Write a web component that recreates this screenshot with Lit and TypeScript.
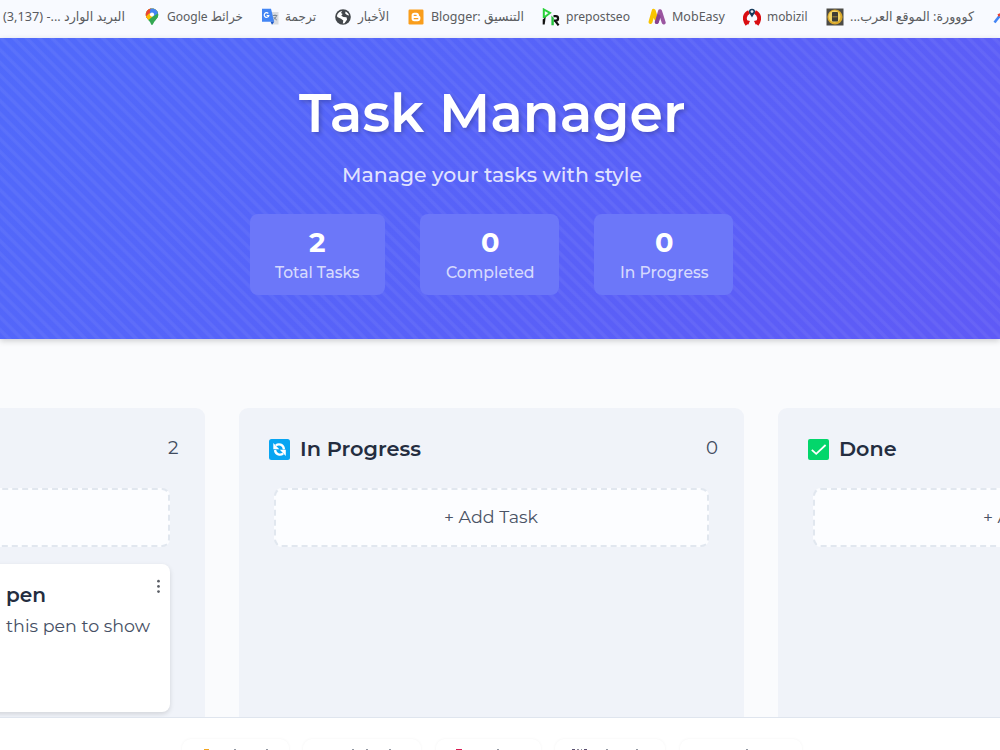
import { LitElement, html, svg, css, nothing } from "lit";
import { customElement, property } from "lit/decorators.js";

/** A single line of text set to an exact measure. */
const line = (text: string, w: number, h: number, base: number, cls: string, rtl = false) => html`
  <svg class="line ${cls}" width=${w} height=${h}>
    <text x=${w / 2} y=${base} text-anchor="middle" textLength=${w}
      lengthAdjust="spacingAndGlyphs" direction=${rtl ? "rtl" : "ltr"}>${text}</text>
  </svg>`;

const lineStyles = css`
  .line { display: block; overflow: visible; flex: none; font-family: Montserrat, Inter, sans-serif; }
`;

const icons: Record<string, unknown> = {
  maps: svg`
    <clipPath id="pin"><path d="M9 .5C5.400 .5 2.800 3.200 2.800 6.700c0 3.300 2.400 4.600 4 7.100.9 1.400 1.400 3.200 2.200 3.200s1.200-1.800 2.100-3.200c1.700-2.500 4.100-3.800 4.100-7.100C15.200 3.200 12.600.5 9 .5z"/></clipPath>
    <g clip-path="url(#pin)"><rect width="18" height="18" fill="#34a853"/>
      <path d="M0 14 5 9 9 9.500 14 5 18 0H0z" fill="#fbbc04"/><path d="M8 10 16 1v9l-6 7z" fill="#34a853"/>
      <path d="M0 0h8L9 6 3 12 0 8z" fill="#ea4335"/><path d="M2 9.500 6.500 5 9 9 4.800 12.500z" fill="#fbbc04"/>
      <path d="M7.500 0H18v3L11 8 6.800 5z" fill="#4285f4"/></g>
    <circle cx="9" cy="6.600" r="2.100" fill="#fff"/>`,
  translate: svg`
    <path d="M7 4h10.500v12.500H11z" fill="#d8dbe0"/><path d="M1 .8h9l3.200 13H1z" fill="#4285f4"/>
    <path d="M9.500 13.800H13.200L11 16.800z" fill="#1a56c4"/>
    <path d="M7.300 5.500A2.300 2.300 0 1 0 7.800 7.500H5.600" fill="none" stroke="#fff" stroke-width="1.200"/>
    <path d="M11.800 7.500h4.500M14 6.500v1M15.500 7.500c-.4 2-1.700 3.300-2.800 4.200M12.800 9c.7 1.400 1.800 2.400 3 3" fill="none" stroke="#7b8794"/>`,
  globe: svg`
    <circle cx="9" cy="9" r="7.800" fill="#43474b"/>
    <path d="M3 7.500c.7-2.500 2.800-4.200 5.200-4.500L7 5l1.600 1L7.300 7.800 9.500 9l3 .2.600 2.300-2.600 3.800L8.800 15.500 9.300 12.500 7 10.800 3.300 9z" fill="#fff"/>
    <path d="M11.500 3.500c1.900.8 3.200 2.300 3.600 4l-2-.4-1.900-1.600z" fill="#fff"/>`,
  blogger: svg`
    <rect x="1.500" y="1.500" width="15" height="15" rx="1.200" fill="#f99d1c"/>
    <path d="M7.200 4.800h2.300c1.500 0 2.500 1 2.500 2.300 0 .9.3 1 .8 1.100.5.200.6.500.6 1v1.400c0 1.700-1.100 2.700-2.700 2.700H7.200c-1.600 0-2.600-1-2.600-2.700V7.500c0-1.700 1-2.700 2.600-2.700z" fill="#fff"/>
    <path d="M7.200 7.300h2M7.200 10.700h3.600" stroke="#f99d1c" stroke-width="1.200" stroke-linecap="round"/>`,
  prepost: svg`
    <path d="M1.800 10V1.500L8 5 1.800 9.800" fill="none" stroke="#2bd13b" stroke-width="2"/><path d="M.7 11.500l3-2.500-1 7.500h-2z" fill="#111"/>
    <path d="M11.500 8.200h2.300c3 0 3 4.400 0 4.400h-2M13 12.600l3.600 4.700" fill="none" stroke="#111" stroke-width="2.200"/>
    <path d="M9.400 7.500v9.800h2.400V10z" fill="#22c23a"/>`,
  mobeasy: svg`
    <g fill="none" stroke-width="4" stroke-linecap="round" stroke-linejoin="round">
    <path d="M8.800 14 12 3.200 15.700 14.500" stroke="#9a55a0"/><path d="M2.500 14 5.700 2.800 8.200 11" stroke="#f8c400"/><path d="M8.800 14 10.500 8.500" stroke="#874292"/></g>`,
  mobizil: svg`
    <path d="M6 3.900C.8 6.500 .8 12 4.200 16.500M12 3.900c5.200 2.600 5.200 8.100 1.800 12.600" fill="none" stroke="#d90d12" stroke-width="3.900"/>
    <path d="M3 12l4 1-2 4zM15 12l-4 1 2 4z" fill="#d90d12"/>
    <path d="M5.900 3.800a3.100 3.100 0 1 1 6.200 0c0 2-1.900 3-3.100 5.700-1.200-2.700-3.100-3.700-3.100-5.700z" fill="#163a5c"/><circle cx="9" cy="3.600" r="1.400" fill="#e9eef4"/>`,
  kooora: svg`
    <rect x=".5" y=".5" width="17" height="17" fill="#4c4b47"/><circle cx="9" cy="9" r="7.600" fill="#d9a82b"/>
    <circle cx="8.500" cy="8.500" r="5.900" fill="#f3d566"/><rect x="6" y="4" width="6" height="9.500" rx=".8" fill="#3f3d35"/>
    <path d="M6.500 8.800h5" stroke="#a58a3a"/>`,
  arc: svg`<path d="M2.500 14.500 7.500 8" stroke="#4285f4" stroke-width="2.600"/><path d="M6 7.500 12 5" stroke="#ea4335" stroke-width="2.600"/>`,
};

interface Bookmark { icon?: string; text?: string; w?: number; rtl?: boolean }

const bookmarks: Bookmark[] = [
  { text: "البريد الوارد ...- (3,137)", w: 122, rtl: true },
  { icon: "maps", text: "خرائط Google", w: 76, rtl: true },
  { icon: "translate", text: "ترجمة", w: 31, rtl: true },
  { icon: "globe", text: "الأخبار", w: 31, rtl: true },
  { icon: "blogger", text: "Blogger: التنسيق", w: 93 },
  { icon: "prepost", text: "prepostseo", w: 64 },
  { icon: "mobeasy", text: "MobEasy", w: 53 },
  { icon: "mobizil", text: "mobizil", w: 40.500 },
  { icon: "kooora", text: "كووورة: الموقع العرب...", w: 124, rtl: true },
  { icon: "arc" },
];

@customElement("bookmark-bar")
export class BookmarkBar extends LitElement {
  static styles = [lineStyles, css`
    :host { display: flex; gap: 18px; height: 38px; padding-left: 3px; background: #f8faff; overflow: hidden; box-sizing: border-box; }
    .item { display: flex; gap: 6px; flex: none; }
    .icon { display: block; margin-top: 7.500px; flex: none; }
    .line { fill: #5a5c60; font-family: "Noto Sans", "DejaVu Sans", sans-serif; font-size: 13.200px; }
  `];
  render() {
    return bookmarks.map((b) => html`<div class="item">
      ${b.icon ? html`<svg class="icon" width="18" height="18" viewBox="0 0 18 18">${icons[b.icon]}</svg>` : nothing}
      ${b.text ? line(b.text, b.w!, 38, 21.300, "", b.rtl) : nothing}
    </div>`);
  }
}

const stats = [
  { value: "2", vw: 16.500, label: "Total Tasks", w: 84.500 },
  { value: "0", vw: 18.500, label: "Completed", w: 88.500 },
  { value: "0", vw: 18.500, label: "In Progress", w: 88.500 },
];

@customElement("page-hero")
export class PageHero extends LitElement {
  static styles = [lineStyles, css`
    :host { display: flex; flex-direction: column; align-items: center; box-sizing: border-box; height: 300.500px;
      padding: 41px 16.500px 0 0; position: relative; box-shadow: 0 2px 6px rgba(0, 0, 0, .18);
      background: repeating-linear-gradient(45deg, transparent 0 4px, rgba(255, 255, 255, .055) 5.500px 7.500px, transparent 9px),
        linear-gradient(135deg, #506afb, #5f5af6); }
    .title { fill: #fff; font-size: 52.600px; font-weight: 600; filter: drop-shadow(2px 2px 2px rgba(0, 0, 0, .2)); }
    .subtitle { margin-top: 7px; fill: rgba(255, 255, 255, .84); font-size: 20.800px; font-weight: 500; }
    .stats { display: flex; gap: 35px; margin-top: 22.500px; }
    .stat { display: flex; flex-direction: column; align-items: center; box-sizing: border-box; height: 81.500px;
      padding: 15px 25.300px 0; border-radius: 8px; background: #6c77f9; }
    .value { fill: #fff; font-size: 26.400px; font-weight: 700; }
    .label { fill: rgba(255, 255, 255, .74); font-size: 15.800px; font-weight: 500; }
  `];
  render() {
    return html`
      ${line("Task Manager", 386.500, 70, 53.400, "title")}
      ${line("Manage your tasks with style", 300, 35, 26.400, "subtitle")}
      <div class="stats">${stats.map((s) => html`<div class="stat">
        ${line(s.value, s.vw, 30, 23.200, "value")}${line(s.label, s.w, 25, 18.600, "label")}
      </div>`)}</div>`;
  }
}

@customElement("task-column")
export class TaskColumn extends LitElement {
  @property() heading = "";
  @property({ type: Number }) measure = 0;
  @property() icon = "";
  @property() count = "0";
  @property({ type: Boolean }) filled = false;
  static styles = [lineStyles, css`
    :host { display: block; box-sizing: border-box; padding: 26px 35px 0 34.500px; border-radius: 9px 9px 0 0; background: #f0f3f9; }
    .head { display: flex; align-items: center; gap: 10px; height: 30px; margin: 0 -8.800px 0 -4.800px; }
    .heading { fill: #242d40; font-size: 20px; font-weight: 600; }
    .count { margin-left: auto; fill: #414b5e; font-size: 17.800px; }
    .add { display: flex; justify-content: center; box-sizing: border-box; height: 59px; margin-top: 24px;
      border: 2px dashed #e1e7ef; border-radius: 8px; background: #fcfdff; }
    .add-label { fill: #4a5365; font-size: 17.200px; }
    .card { display: flex; justify-content: space-between; box-sizing: border-box; height: 148px; margin-top: 17px;
      padding: 14px 9px 0 271px; border-radius: 8px; background: #fff; box-shadow: 0 2px 5px rgba(0, 0, 0, .13); }
    .card-title { fill: #242d40; font-size: 20px; font-weight: 600; }
    .card-text { fill: #465064; font-size: 17.500px; }
    .dots { flex: none; margin-left: -20px; }
  `];
  render() {
    const mark = this.icon === "sync"
      ? svg`<rect width="21" height="21" rx="2.500" fill="#08a5f2"/>
          <path d="M6.800 6.400C9.500 4.600 14.300 5 15 10.300M14.200 14.600C11.500 16.400 6.700 16 6 11" fill="none" stroke="#fff" stroke-width="2.300"/>
          <path d="M4.300 4v6.200h6zM16.800 17v-6.200h-6z" fill="#fff"/>`
      : svg`<rect width="21" height="21" rx="2" fill="#03d66b"/><path d="M3.800 10.800 8.200 14.800 17.600 6" fill="none" stroke="#fff" stroke-width="1.800"/>`;
    return html`
      <div class="head">
        ${this.icon ? html`<svg width="21" height="21" viewBox="0 0 21 21">${mark}</svg>` : nothing}
        ${this.heading ? line(this.heading, this.measure, 30, 22.200, "heading") : nothing}
        ${line(this.count, this.count === "0" ? 12 : 10.500, 30, 20.200, "count")}
      </div>
      <div class="add">${line("+ Add Task", 94, 55, 33.200, "add-label")}</div>
      ${this.filled ? html`<div class="card">
        <div>${line("pen", 40, 30, 23.600, "card-title")}${line("this pen to show", 144, 30, 23.700, "card-text")}</div>
        <svg class="dots" width="5" height="18" fill="#5a5e65"><circle cx="2.500" cy="3.200" r="1.350"/><circle cx="2.500" cy="8.400" r="1.350"/><circle cx="2.500" cy="13.600" r="1.350"/></svg>
      </div>` : nothing}`;
  }
}

/** Toolbar chips: width plus the tips of their content showing above the fold. */
const chips = [
  { w: 107, tips: [[22, 5, "#f2a51e"], [52, 2, "#9298a2"], [84, 2, "#9298a2"]] },
  { w: 118, tips: [[49, 2, "#9298a2"], [63, 2, "#9298a2"], [86, 2, "#9298a2"]] },
  { w: 105, tips: [[20, 6, "#d81b52"], [61, 2, "#9298a2"]] },
  { w: 110, tips: [[17, 3, "#5b5070"], [22, 2, "#8c8798"], [26, 1, "#8c8798"], [29, 3, "#5b5070"], [51, 2, "#9298a2"], [81, 2, "#9298a2"]] },
  { w: 122, tips: [[66, 2, "#9298a2"]] },
] as { w: number; tips: [number, number, string][] }[];

@customElement("app-root")
export class AppRoot extends LitElement {
  static styles = css`
    :host { display: flex; flex-direction: column; width: 1000px; height: 750px; overflow: hidden; background: #fafbfd; }
    bookmark-bar, page-hero { flex: none; }
    .board { display: grid; grid-template-columns: repeat(3, 504.600px); gap: 34.400px; flex: none; box-sizing: border-box;
      height: 378.500px; padding-top: 69.500px; margin-left: -299.700px; }
    .toolbar { display: flex; justify-content: center; gap: 14.500px; box-sizing: border-box; height: 33px; flex: none; overflow: hidden;
      padding: 21px 17px 0 0; border-top: 1px solid #dfe5ee; background: #fff; position: relative; }
    .chip { flex: none; height: 36px; border-radius: 9px; background: #fff; box-shadow: 0 0 3px rgba(0, 0, 0, .05); }
  `;
  render() {
    return html`
      <bookmark-bar></bookmark-bar>
      <page-hero></page-hero>
      <div class="board">
        <task-column count="2" filled></task-column>
        <task-column icon="sync" heading="In Progress" measure="121"></task-column>
        <task-column icon="check" heading="Done" measure="57.500"></task-column>
      </div>
      <div class="toolbar">${chips.map((c) => html`<svg class="chip" width=${c.w} height="36">
        ${c.tips.map(([x, w, color]) => svg`<rect x=${x} y="10" width=${w} height="1.500" fill=${color}/>`)}
      </svg>`)}</div>`;
  }
}
